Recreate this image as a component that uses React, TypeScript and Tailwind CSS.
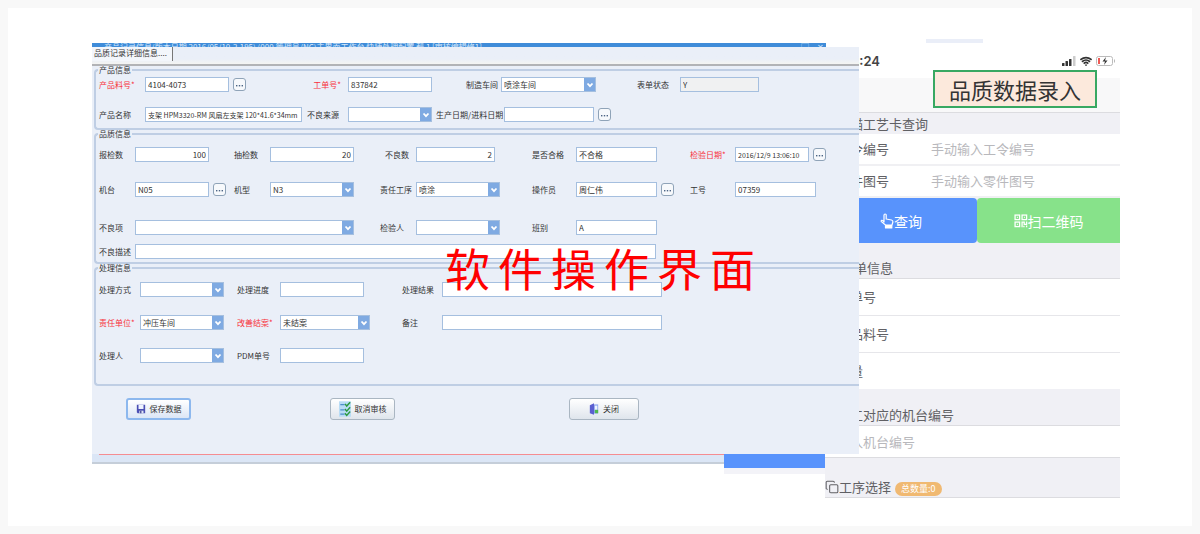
import type { ReactNode } from 'react';
import { Copy, Wifi } from 'lucide-react';

type FieldProps = {
  id: string;
  label: string;
  value?: string;
  required?: boolean;
  select?: boolean;
  numeric?: boolean;
  readOnly?: boolean;
  lookup?: boolean;
  alignEnd?: boolean;
  dense?: boolean;
  width?: string;
  span?: string;
};

const LookupButton = ({ label }: { label: string }) => (
  <button
    type="button"
    aria-label={`${label}查找`}
    className="flex h-[13px] w-[13px] shrink-0 items-center justify-center rounded-[3px] border border-[#8fa3b8] bg-[#f7f9fc]"
  >
    <svg viewBox="0 0 9 9" className="h-[9px] w-[9px]" fill="#4d6485">
      <rect x="1" y="5" width="1.4" height="1.4" />
      <rect x="3.8" y="5" width="1.4" height="1.4" />
      <rect x="6.6" y="5" width="1.4" height="1.4" />
    </svg>
  </button>
);

const Field = ({
  id,
  label,
  value = '',
  required,
  select,
  numeric,
  readOnly,
  lookup,
  alignEnd,
  dense,
  width = 'w-[84px]',
  span = '',
}: FieldProps) => (
  <>
    <label
      htmlFor={id}
      className={`h-[15px] whitespace-nowrap leading-[15px] ${required ? 'text-[#f8313b]' : ''} ${alignEnd ? 'pr-[7px] text-right' : ''}`}
    >
      {label}
      {required && '*'}
    </label>
    <div className={`flex h-[15px] items-center gap-1 ${span}`}>
      {select ? (
        <div className={`relative h-[15px] shrink-0 ${width}`}>
          <select id={id} defaultValue={value} className="block h-full w-full appearance-none border border-[#a5bfdf] bg-white pl-0.5 pr-3 leading-[13px]">
            <option>{value}</option>
          </select>
          <span className="pointer-events-none absolute right-px top-px flex h-[13px] w-[11px] items-center justify-center bg-[#7faae2]">
            <svg viewBox="0 0 8 8" className="h-2 w-2" fill="none" stroke="#fff" strokeWidth="1.8">
              <path d="M1.5 2.5 4 5.2 6.5 2.5" />
            </svg>
          </span>
        </div>
      ) : (
        <input
          id={id}
          type="text"
          defaultValue={value}
          readOnly={readOnly}
          className={`block h-[15px] shrink-0 border border-[#a5bfdf] px-0.5 leading-[13px] ${width} ${dense ? 'text-[7px]' : ''} ${numeric ? 'text-right' : ''} ${readOnly ? 'bg-[#f0f1f2]' : 'bg-white'}`}
        />
      )}
      {lookup && <LookupButton label={label} />}
    </div>
  </>
);

const Group = ({ title, className, children }: { title: string; className: string; children: ReactNode }) => (
  <fieldset className="ml-0.5 min-w-0 rounded-l border-2 border-r-0 border-[#bfcee4]">
    <legend className="ml-0.5 px-px leading-[8px]">{title}</legend>
    <div className={`grid items-start pl-[3px] ${className}`}>{children}</div>
  </fieldset>
);

const SaveIcon = () => (
  <svg viewBox="0 0 12 12" className="h-2.5 w-2.5">
    <path d="M1 1h10v10H2L1 10z" fill="#4b4fb4" />
    <path d="M3 1h6v5H3z" fill="#eef3ff" />
    <path d="M4 8h5v3H4z" fill="#dfe5f5" />
    <path d="M5 8h1.5v3H5z" fill="#3a3c8c" />
  </svg>
);

const ChecklistIcon = () => (
  <svg viewBox="0 0 14 18" className="h-4 w-3">
    <path d="M0 0h14v18H0z" fill="#b9dcf5" />
    <path d="M1.5 4h5M1.5 10h5M1.5 15h5" stroke="#4f8fc9" strokeWidth="1.4" />
    <path d="m7 3 2 2.5L13 1M7 9l2 2.5L13 7M7 14l2 2.5 4-4.5" fill="none" stroke="#2c9b3f" strokeWidth="1.7" />
  </svg>
);

const DoorIcon = () => (
  <svg viewBox="0 0 12 14" className="h-3 w-2.5">
    <path d="M1 2.5 6 0v14l-5-2z" fill="#5b5fd0" />
    <path d="M6 1.5h5v11H6z" fill="#8fa8ee" />
    <path d="M7 3h3v5H7z" fill="#eef4ff" />
    <path d="M7 8h4v4H7z" fill="#52b84e" />
  </svg>
);

const DesktopForm = () => (
  <section className="relative z-10 mt-1 min-w-0 flex-1 text-[8px] text-[#333]">
    <div className="mr-[33px] flex h-1 items-start justify-between overflow-hidden bg-[#3f8cd9] pl-3 pr-0.5 leading-[8px] text-[#d9e9fa]">
      <span className="whitespace-nowrap">产品记录信息(版本日期 2016/05/10-2.195) (000.管理员/NC)主界面工作台 快捷处理配置 帮 1 [审核编辑修1]</span>
      <span className="flex gap-2">
        <span>▢</span>
        <span>✕</span>
      </span>
    </div>
    <form className="overflow-hidden bg-[#eaeff8]">
      <div className="flex h-[19px] items-start border-b-2 border-[#b2b3b6] bg-linear-to-b from-[#eaeff8] from-70% to-[#f4f4f2]">
        <div className="h-3.5 w-[81px] border-r border-[#777] bg-[#f3f6fb] pl-0.5 leading-[11px]">品质记录详细信息....</div>
      </div>

      <Group title="产品信息" className="grid-cols-[46px_162px_41px_88px_68px_133px_43px_1fr] gap-y-[15px] pb-1.5 pt-[3px]">
        <Field id="part-no" label="产品料号" value="4104-4073" required lookup />
        <Field id="order-no" label="工单号" value="837842" required alignEnd />
        <div className="col-span-2 grid grid-cols-[30px_35px_1fr]">
          <span />
          <Field id="workshop" label="制造车间" value="喷涂车间" select width="w-[95px]" />
        </div>
        <Field id="status" label="表单状态" value="Y" readOnly width="w-[79px]" />
        <Field id="part-name" label="产品名称" value="支架 HPM3320-RM 风扇左支架 120*41.6*34mm" dense width="w-[157px]" />
        <Field id="source" label="不良来源" select />
        <Field id="made-on" label="生产日期/进料日期" lookup width="w-[90px]" />
      </Group>

      <Group title="品质信息" className="grid-cols-[36px_99px_36px_110px_36px_116px_44px_114px_45px_1fr] grid-rows-[35px_38px_24px_15px] pb-[3px] pt-[9px]">
        <Field id="reported" label="报检数" value="100" numeric width="w-[74px]" />
        <Field id="sampled" label="抽检数" value="20" numeric />
        <Field id="defects" label="不良数" value="2" numeric alignEnd width="w-[79px]" />
        <Field id="qualified" label="是否合格" value="不合格" width="w-[81px]" />
        <Field id="checked-on" label="检验日期" value="2016/12/9 13:06:10" required lookup dense width="w-[74px]" />

        <Field id="machine" label="机台" value="N05" lookup width="w-[74px]" />
        <Field id="model" label="机型" value="N3" select />
        <Field id="process" label="责任工序" value="喷涂" select />
        <Field id="operator" label="操作员" value="周仁伟" lookup width="w-[81px]" />
        <Field id="worker-no" label="工号" value="07359" width="w-[81px]" />

        <Field id="defect-item" label="不良项" select width="w-[219px]" span="col-span-3" />
        <Field id="inspector" label="检验人" select />
        <Field id="shift" label="班别" value="A" width="w-[81px]" span="col-span-3" />

        <Field id="defect-note" label="不良描述" width="w-[521px]" span="col-span-9" />
      </Group>

      <Group title="处理信息" className="grid-cols-[41px_97px_43px_122px_40px_1fr] gap-y-[18px] pb-[21px] pt-2.5">
        <Field id="method" label="处理方式" select />
        <Field id="progress" label="处理进度" />
        <Field id="result" label="处理结果" width="w-[220px]" />

        <Field id="unit" label="责任单位" value="冲压车间" required select />
        <Field id="closed" label="改善结案" value="未结案" required select width="w-[90px]" />
        <Field id="remark" label="备注" width="w-[220px]" />

        <Field id="handler" label="处理人" select />
        <Field id="pdm" label="PDM单号" />
      </Group>

      <div className="grid grid-cols-[204px_239px_1fr] pb-[34px] pl-[34px] pt-3">
        <button type="button" className="flex h-[22px] w-[65px] items-center justify-center gap-1 rounded-[3px] border-2 border-[#8db8ee] bg-linear-to-b from-white to-[#dce6f6]">
          <SaveIcon />
          保存数据
        </button>
        <button type="button" className="flex h-[22px] w-[65px] items-center justify-center gap-1 rounded-[3px] border border-[#aab6c2] bg-linear-to-b from-white to-[#dfe5ec]">
          <ChecklistIcon />
          取消审核
        </button>
        <button type="button" className="flex h-[22px] w-[70px] items-center justify-center gap-1 rounded-[3px] border border-[#aab6c2] bg-linear-to-b from-white to-[#dfe5ec]">
          <DoorIcon />
          关闭
        </button>
      </div>
    </form>
    <div className="mr-[34px] flex items-start">
      <div className="h-2.5 flex-1 border-b-2 border-[#c5ced9] bg-[#dbe6f6] pl-[7px]">
        <div className="h-px bg-[#f58c91]" />
      </div>
      <div className="h-5 w-[101px] border-b-[6px] border-[#f3f3f8] bg-[#5893fc]" />
    </div>
  </section>
);

const PhoneHeading = ({ children }: { children: ReactNode }) => (
  <h2 className="flex h-9 items-end border-b border-[#dcdce0] bg-[#f0f0f5] pl-3">{children}</h2>
);

const PhoneInput = ({ id, label, placeholder }: { id: string; label: string; placeholder: string }) => (
  <div className="flex h-8 items-center border-b-2 border-[#f0f0f3] pl-3">
    <label htmlFor={id} className="w-[94px]">{label}</label>
    <input id={id} type="text" placeholder={placeholder} className="min-w-0 flex-1 placeholder:text-[#b8b8bc]" />
  </div>
);

const PhoneScreen = () => (
  <section className="relative -ml-[34px] w-[295px] shrink-0 text-[13px] leading-5 text-[#606064]">
    <div className="ml-[101px] h-1 w-[57px] bg-[#eaeef8]" />
    <div className="flex h-[35px] items-center justify-between pl-[26px] pr-1">
      <span className="font-['Inter',sans-serif] font-semibold text-[#444]">8:24</span>
      <span className="flex items-center gap-1">
        <svg viewBox="0 0 14 10" className="h-2.5 w-3.5" fill="#333">
          <rect x="0" y="7" width="2.5" height="3" rx=".5" />
          <rect x="3.5" y="5" width="2.5" height="5" rx=".5" />
          <rect x="7" y="3" width="2.5" height="7" rx=".5" />
          <rect x="11" y="0" width="2.5" height="10" rx=".5" fill="#ccc" />
        </svg>
        <Wifi className="h-3 w-3" color="#333" strokeWidth={3.5} />
        <svg viewBox="0 0 20 10" className="h-2.5 w-5" fill="none">
          <rect x=".5" y=".5" width="16" height="9" rx="2" stroke="#bbb" />
          <rect x="2" y="2" width="2" height="6" fill="#ee5a55" />
          <path d="M10 1 6.5 5.5H9L8 9l3.5-4.5H9z" fill="#333" />
          <path d="M18.5 3.5v3" stroke="#bbb" />
        </svg>
      </span>
    </div>
    <div className="h-[35px] border-b border-[#dcdce0] bg-[#f8f8f9]" />
    <h1 className="absolute right-[23px] top-[31px] border-2 border-[#38a862] bg-[#fce9dc] px-3.5 text-[22px] leading-[34px] text-[#333]">品质数据录入</h1>

    <h2 className="flex h-[21px] items-center bg-[#f0f0f5] pl-3">扫描工艺卡查询</h2>
    <PhoneInput id="m-order" label="工令编号" placeholder="手动输入工令编号" />
    <PhoneInput id="m-drawing" label="零件图号" placeholder="手动输入零件图号" />
    <div className="flex h-[45px] bg-[#f0f0f5] text-sm text-white">
      <button type="button" className="flex w-[152px] items-center justify-center rounded-r-sm bg-[#5893fc]">
        <svg viewBox="0 0 14 16" className="h-4 w-3.5" fill="none" stroke="#fff" strokeWidth="1.2" strokeLinejoin="round">
          <path d="M4 9V2.2Q4 1 5.1 1t1.1 1.2V6l5.3 1q1.5.4 1.4 2L12 12H5.5L1.4 8.6q-.6-.9.3-1.3t2.3 1.7Z" />
          <path d="M5.5 12.5h6.3V15H5.5z" fill="#fff" />
        </svg>
        查询
      </button>
      <button type="button" className="flex flex-1 items-center justify-center rounded-l-sm bg-[#87e28a]">
        <svg viewBox="0 0 13 13" className="h-3.5 w-3.5 shrink-0" fill="none" stroke="#fff" strokeWidth="1.2">
          <rect x="1" y="1" width="4.2" height="4.2" />
          <rect x="7.5" y="1" width="4.2" height="4.2" />
          <rect x="1" y="7.5" width="4.2" height="4.2" />
          <path d="M7.5 12.2V7.5h2v2.2h2.2V7M11.7 12.2v-1.5M9.2 12.2v-1.2M2.7 3.1h.8M9.2 3.1h.8M2.7 9.6h.8" />
        </svg>
        扫二维码
      </button>
    </div>

    <PhoneHeading>
      <span className="pl-1">工单信息</span>
    </PhoneHeading>
    <ul>
      <li className="flex h-[37px] items-center border-b border-[#e6e6ea] pl-3">工单号</li>
      <li className="flex h-[37px] items-center border-b border-[#e6e6ea] pl-3">产品料号</li>
      <li className="flex h-[37px] items-center border-b border-[#f0f0f5] pl-3">数量</li>
    </ul>
    <PhoneHeading>
      <label htmlFor="m-machine">员工对应的机台编号</label>
    </PhoneHeading>
    <div className="flex h-8 items-center border-b border-[#dcdce0] pl-3">
      <input id="m-machine" type="text" placeholder="输入机台编号" className="w-full placeholder:text-[#b8b8bc]" />
    </div>
    <h2 className="flex h-10 items-end border-b border-[#dcdce0] bg-[#f0f0f5]">
      <Copy className="mb-[3px] h-3.5 w-3.5" strokeWidth={1.8} />
      工序选择
      <span className="mb-px ml-1 rounded-full bg-[#f0b972] px-1.5 text-[9px] leading-[14px] text-white">总数量:0</span>
    </h2>
  </section>
);

const App = () => {
  return (
    <main className="relative flex min-h-screen bg-[#f8f8f8] p-2 font-['Noto_Sans_CJK_SC',sans-serif]">
      <div className="flex min-w-0 flex-1 items-start bg-white pl-[84px] pr-[72px] pt-[31px]">
        <DesktopForm />
        <PhoneScreen />
      </div>
      <p className="pointer-events-none absolute inset-0 z-20 flex items-center justify-center gap-2 text-[45px] leading-none text-[#f00]">
        {Array.from('软件操作界面').map((char) => (
          <span key={char}>{char}</span>
        ))}
      </p>
    </main>
  );
};

export default App;
